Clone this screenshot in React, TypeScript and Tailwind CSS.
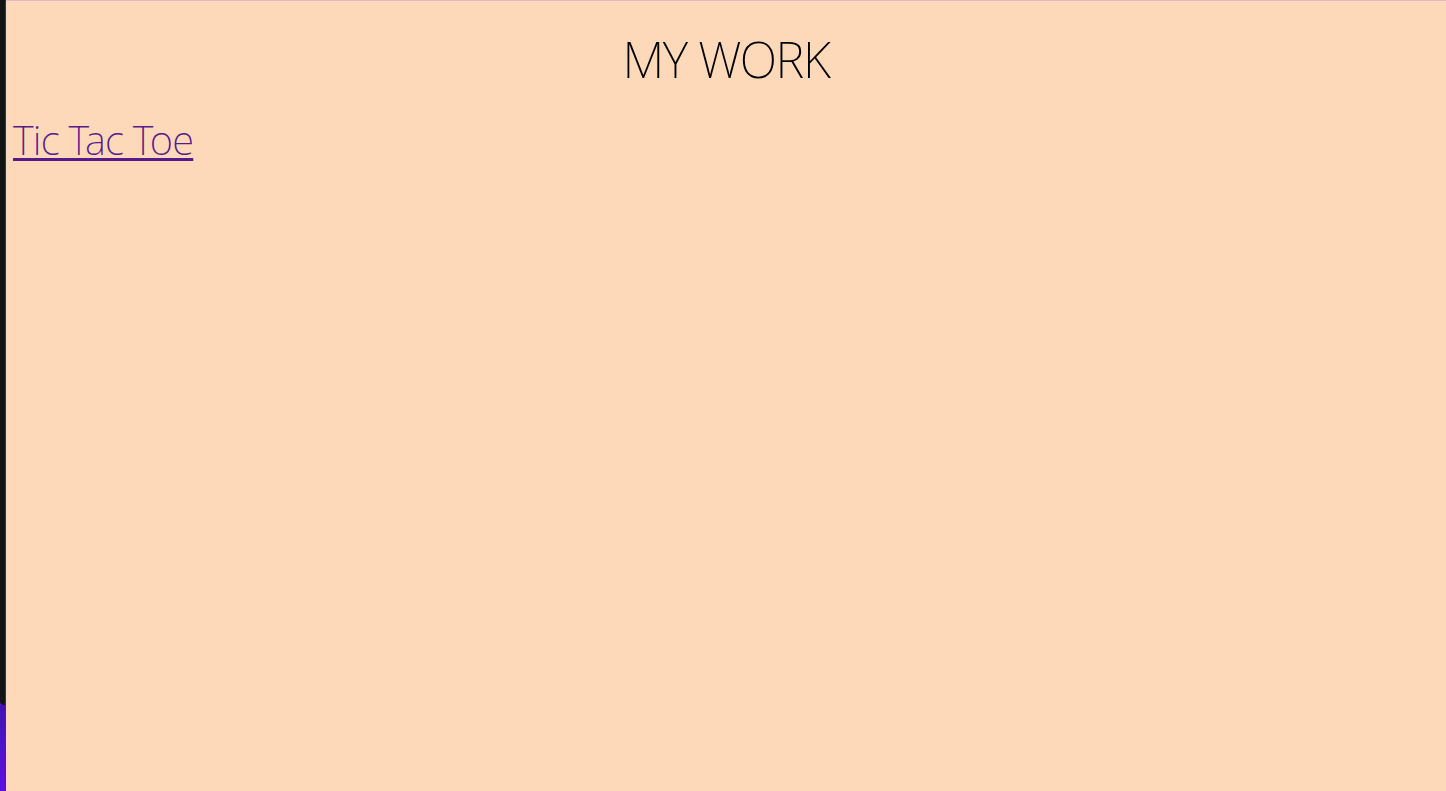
import React from "react";

export default function App() {
  return (
    <div className="flex h-[791px] w-[1446px] overflow-hidden" style={{ fontFamily: '"Noto Sans", sans-serif' }}>
      <div className="flex w-[6px] flex-col border-r border-[#3a3a3a] bg-[#5a10d8]">
        <div className="h-[705px] rounded-bl-[4px] bg-[#141414]" />
        <div className="flex-1 bg-gradient-to-b from-[#4a0fb0] to-[#5c0fe6]" />
      </div>
      <div className="flex-1 border-t border-[#e2b6c4] bg-[#fed9b9] px-[7px]">
        <h1 className="mt-[26px] text-center text-[49px] font-extralight leading-[64px] tracking-[-1.3px] text-black">
          MY WORK
        </h1>
        <div className="mt-[22px]">
          <a href="#" className="text-[40px] font-extralight leading-[54px] tracking-[-0.8px] text-[#551a8b] underline decoration-[3px] underline-offset-[3px]">
            Tic Tac Toe
          </a>
        </div>
      </div>
    </div>
  );
}
